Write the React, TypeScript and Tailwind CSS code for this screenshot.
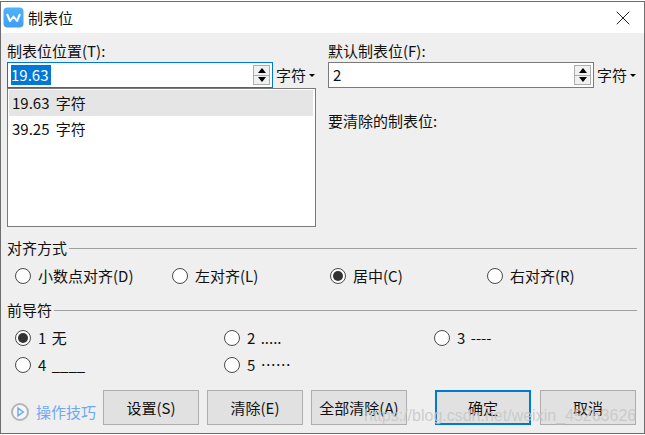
import { X } from 'lucide-react';

const font = { fontFamily: '"Noto Sans CJK SC", sans-serif' };

function Spin() {
    return (
        <div className="w-[17px] h-[20px] mr-[2px] border border-[#acacac] bg-[#f0f0f0] flex flex-col">
            <div className="flex-1 flex items-center justify-center border-b border-[#acacac]">
                <div className="w-0 h-0 border-x-[4px] border-x-transparent border-b-[5px] border-b-black" />
            </div>
            <div className="flex-1 flex items-center justify-center">
                <div className="w-0 h-0 border-x-[4px] border-x-transparent border-t-[5px] border-t-black" />
            </div>
        </div>
    );
}

function NumberInput({ value, active }: { value: string; active?: boolean }) {
    return (
        <div className="flex items-center">
            <div className={`w-[266px] h-[26px] border bg-white flex items-center justify-between pl-[3px] ${active ? 'border-[#0078d7]' : 'border-[#7a7a7a] pl-[3px]'}`}>
                <span className={active ? 'bg-[#0078d7] text-white h-[20px] leading-[20px] w-[40px]' : 'px-[1px]'}>{value}</span>
                <Spin />
            </div>
            <span className="ml-[3px] w-[30px]">字符</span>
            <div className="ml-[3px] w-0 h-0 border-x-[3px] border-x-transparent border-t-[3px] border-t-black" />
        </div>
    );
}

function Radio({ label, checked, className }: { label: string; checked?: boolean; className?: string }) {
    return (
        <div className={`flex items-center h-[27px] ${className ?? ''}`}>
            <div className="w-[16px] h-[16px] rounded-full border border-[#4a4a4a] bg-white flex items-center justify-center">
                {checked && <div className="w-[10px] h-[10px] rounded-full bg-[#333333]" />}
            </div>
            <span className="ml-[7px] whitespace-pre [word-spacing:2px]">{label}</span>
        </div>
    );
}

function GroupTitle({ title }: { title: string }) {
    return (
        <div className="flex items-center h-[20px]">
            <span>{title}</span>
            <div className="flex-1 h-[1px] bg-[#a0a0a0] ml-[2px]" />
        </div>
    );
}

function Btn({ label, primary, className }: { label: string; primary?: boolean; className?: string }) {
    return (
        <div className={`w-[96px] h-[35px] bg-[#e1e1e1] flex items-center justify-center ${primary ? 'border-2 border-[#0078d7]' : 'border border-[#adadad]'} ${className ?? ''}`}>
            {label}
        </div>
    );
}

export default function App() {
    return (
        <div style={font} className="relative w-[645px] h-[435px] overflow-hidden bg-white text-[15px] text-[#111111] leading-[20px]">
            <div className="h-[433px] border-t border-x border-b border-[#6e6e6e] mt-[1px] flex flex-col">
                <div className="h-[31px] bg-white flex items-center pl-[2px] shrink-0">
                    <svg width="21" height="21" viewBox="0 0 21 21">
                        <defs>
                            <linearGradient id="wps" x1="0" y1="0" x2="0" y2="1">
                                <stop offset="0" stopColor="#4db4fb" />
                                <stop offset="1" stopColor="#3f9df5" />
                            </linearGradient>
                        </defs>
                        <rect x="0.5" y="0.5" width="20" height="20" rx="4" fill="url(#wps)" />
                        <path d="M4 7 L7 14 L10.5 9.5 L14 14 L17 7" fill="none" stroke="#ffffff" strokeWidth="2" strokeLinejoin="round" />
                    </svg>
                    <span className="ml-[4px]">制表位</span>
                    <X className="ml-auto mr-[9px] text-[#222222]" size={24} strokeWidth={1} />
                </div>

                <div className="flex-1 bg-[#efefef] pl-[6px] pr-[7px] pt-[8px]">
                    <div className="flex">
                        <div className="w-[321px]">
                            <div className="h-[21px]">制表位位置(T):</div>
                            <NumberInput value="19.63" active />
                            <div className="w-[309px] h-[139px] border border-[#7a7a7a] bg-white p-[1px] [word-spacing:3px]">
                                <div className="h-[26px] bg-[#e5e5e5] pl-[3px] mr-[1px] flex items-center">19.63 字符</div>
                                <div className="h-[26px] pl-[3px] flex items-center">39.25 字符</div>
                            </div>
                        </div>
                        <div className="flex-1">
                            <div className="h-[21px]">默认制表位(F):</div>
                            <NumberInput value="2" />
                            <div className="mt-[23px]">要清除的制表位:</div>
                        </div>
                    </div>

                    <div className="mt-[11px]">
                        <GroupTitle title="对齐方式" />
                        <div className="grid grid-cols-[157px_158px_157px_1fr] pl-[8px] mt-[4px]">
                            <Radio label="小数点对齐(D)" />
                            <Radio label="左对齐(L)" />
                            <Radio label="居中(C)" checked />
                            <Radio label="右对齐(R)" />
                        </div>
                    </div>

                    <div className="mt-[11px]">
                        <GroupTitle title="前导符" />
                        <div className="grid grid-cols-[209px_210px_1fr] pl-[8px] mt-[4px]">
                            <Radio label="1 无" checked />
                            <Radio label="2 ....." />
                            <Radio label="3 ----" />
                            <Radio label="4 ____" />
                            <Radio label="5 ⋯⋯" />
                        </div>
                    </div>

                    <div className="flex items-center mt-[12px]">
                        <div className="flex items-center pt-[8px]">
                            <svg width="20" height="20" viewBox="0 0 20 20" className="ml-[3px] shrink-0">
                                <circle cx="10" cy="10" r="8" fill="#f4f6fa" stroke="#b5b5b5" strokeWidth="2" />
                                <path d="M8 6.2 L13.2 10 L8 13.8 Z" fill="none" stroke="#6ea8f5" strokeWidth="1.5" />
                            </svg>
                            <span className="ml-[6px] w-[67px] text-[#6ea8f5]">操作技巧</span>
                        </div>
                        <div className="flex gap-[8px]">
                            <Btn label="设置(S)" />
                            <Btn label="清除(E)" />
                            <Btn label="全部清除(A)" />
                        </div>
                        <Btn label="确定" primary className="ml-[28px]" />
                        <Btn label="取消" className="ml-[9px]" />
                    </div>
                </div>
            </div>

            <div className="absolute left-[364px] top-[406px] text-[16px] text-[#c6c6c6]/85 whitespace-nowrap" style={{ fontFamily: '"Liberation Sans", sans-serif' }}>
                https://blog.csdn.net/weixin_45263626
            </div>
        </div>
    );
}
